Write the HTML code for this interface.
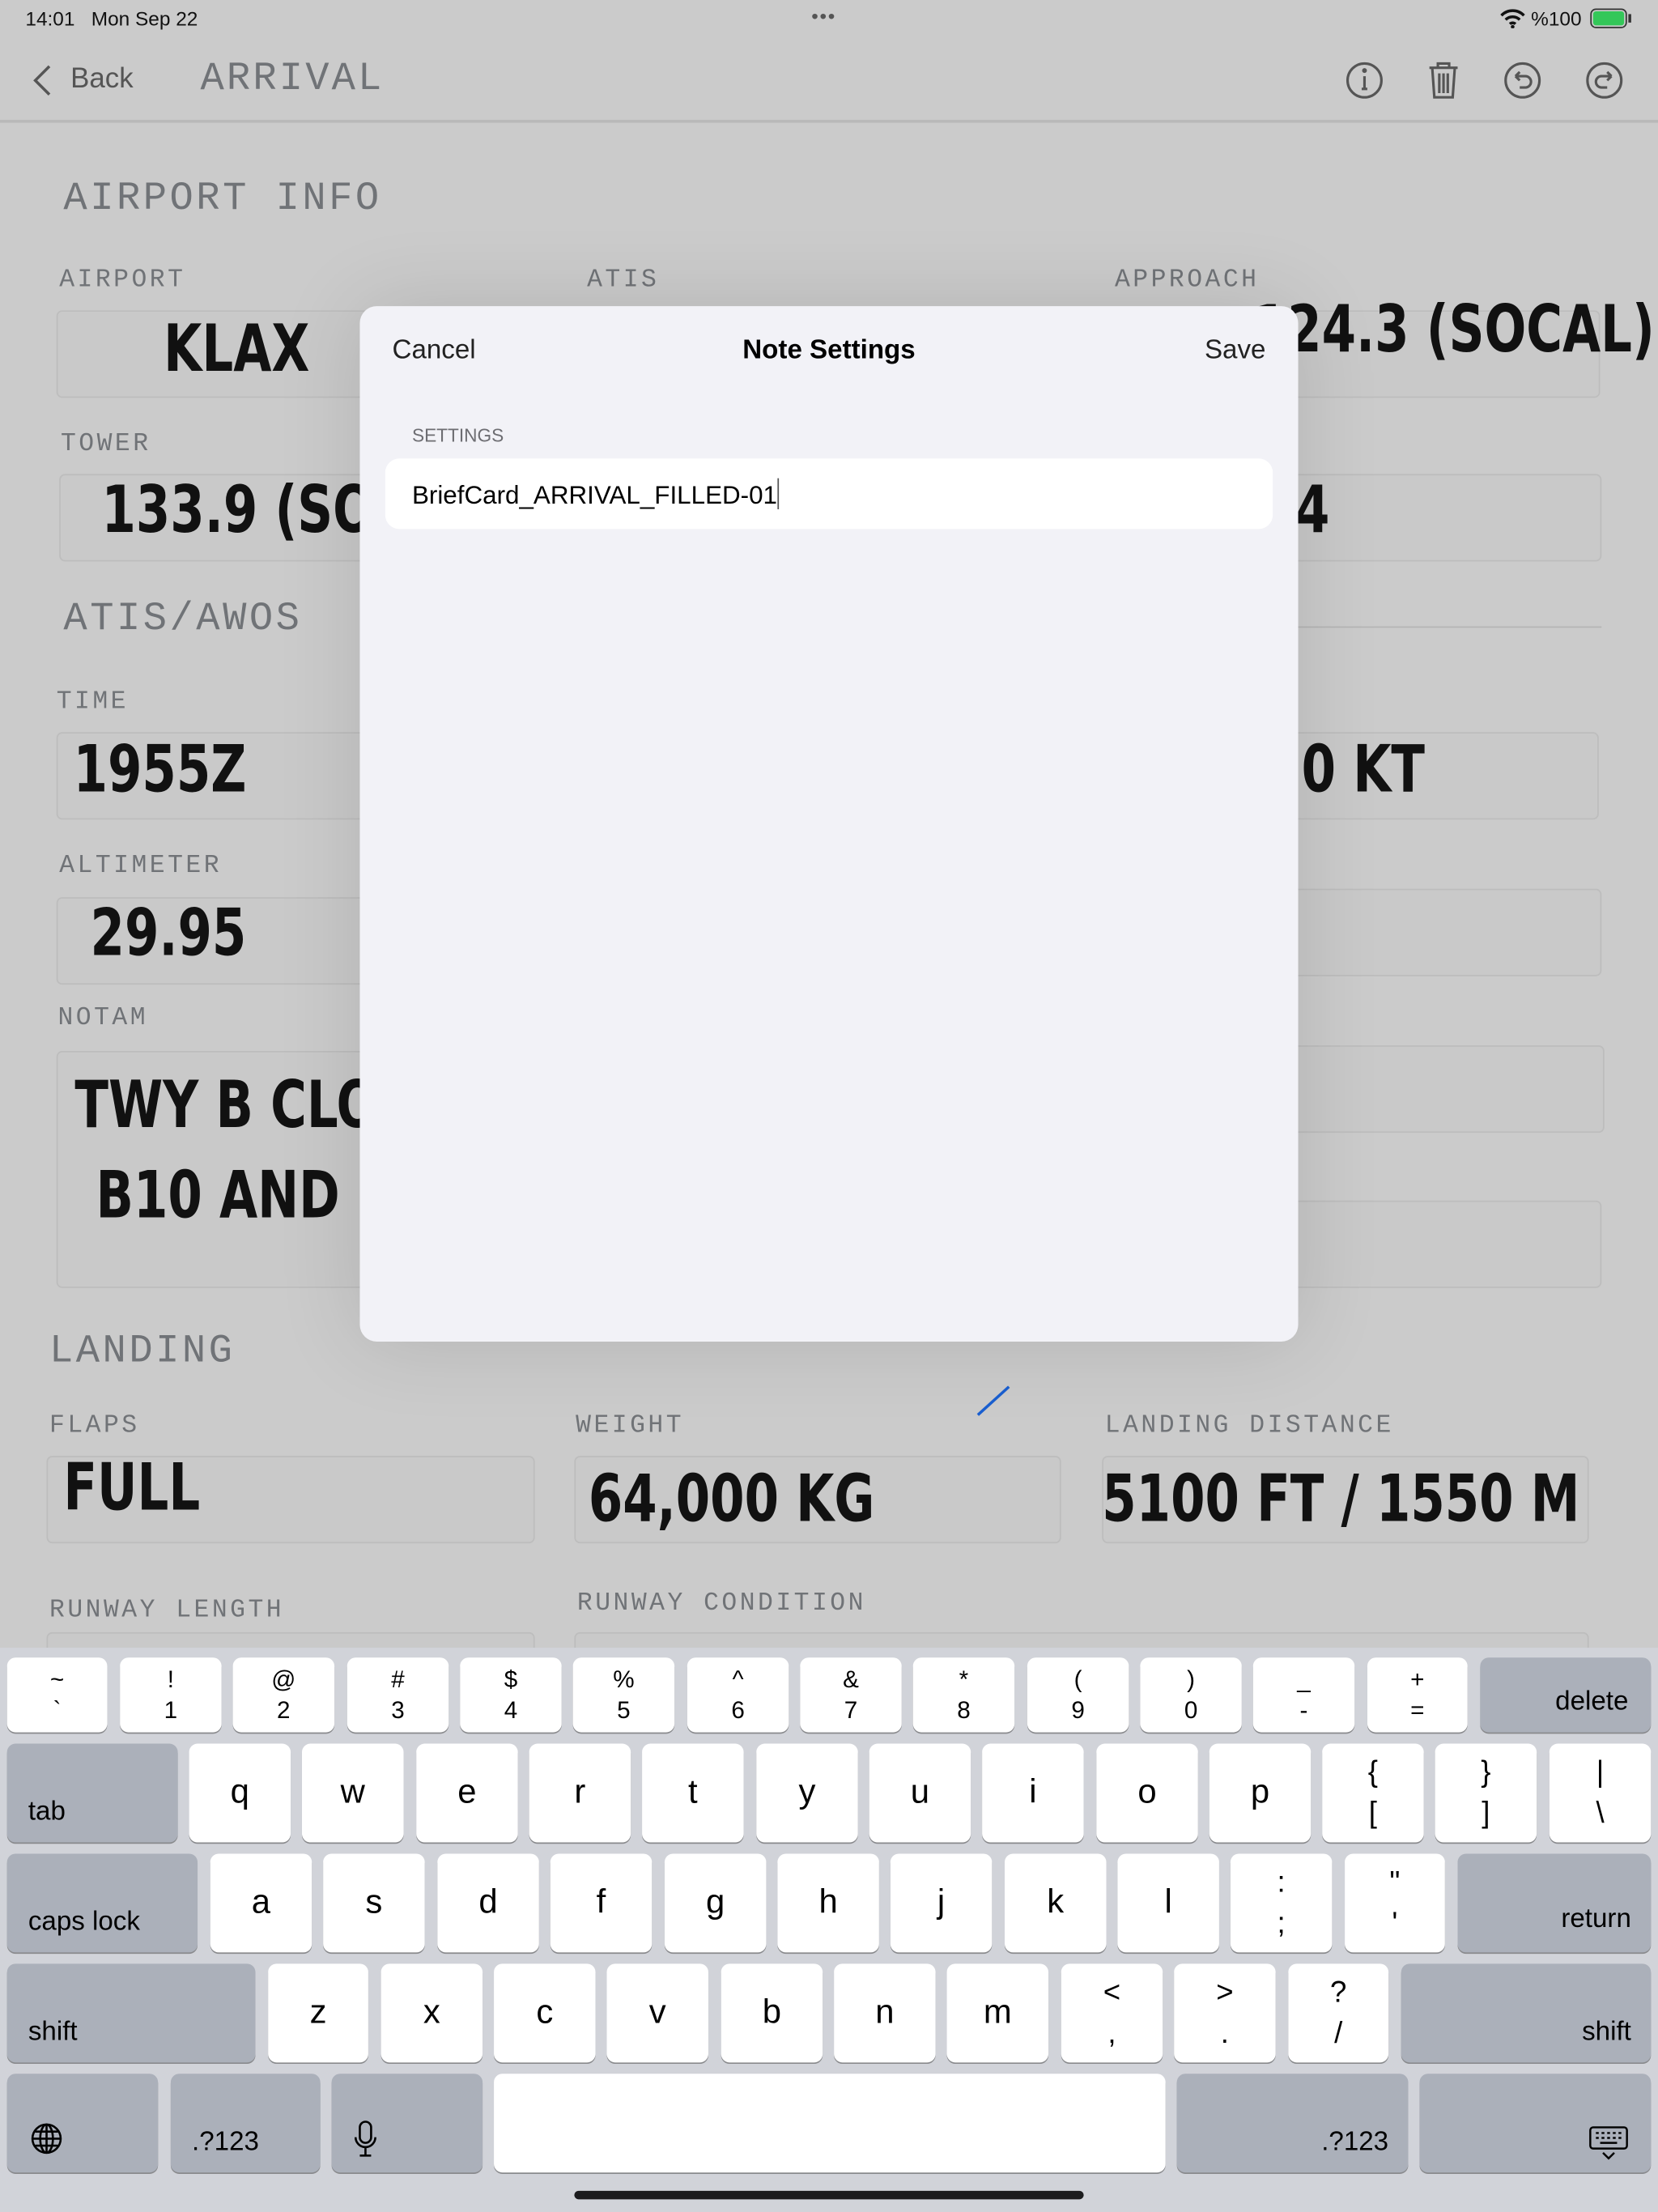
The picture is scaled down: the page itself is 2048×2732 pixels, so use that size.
<!DOCTYPE html>
<html><head><meta charset="utf-8"><style>
*{margin:0;padding:0;box-sizing:border-box}
html,body{width:2048px;height:2732px;overflow:hidden;background:#cacaca}
#s{position:absolute;left:0;top:0;width:1175px;height:1568px;transform:scale(1.74298,1.74235);transform-origin:0 0;background:#cbcbcb;font-family:"Liberation Sans",sans-serif}
.a{position:absolute;white-space:nowrap}
.m{font-family:"Liberation Mono","DejaVu Sans Mono",monospace;color:#707377;letter-spacing:2px}
.lb{font-size:18px}
.hd{font-size:28px;letter-spacing:2px}
.bx{position:absolute;border:1.5px solid #bdbdbd;border-radius:4px;background:#c9c9c9}
.hw{position:absolute;font-family:"DejaVu Sans","Liberation Sans",sans-serif;font-weight:bold;color:#111;white-space:nowrap;transform:scaleX(.76);transform-origin:0 50%}
.k{position:absolute;background:#fff;border-radius:6px;box-shadow:0 1px 0 #898a8d;font-size:24px;color:#000;display:flex;align-items:center;justify-content:center;text-align:center;line-height:1}
.k2{flex-direction:column;font-size:17px;line-height:1.25}
.sp{background:#abb0ba;font-size:19px}
</style></head><body><div id="s">
<div class="a" style="left:18px;top:5px;font-size:14px;color:#111">14:01&nbsp;&nbsp;&nbsp;Mon Sep 22</div>
<div class="a" style="left:575px;top:3px;font-size:14px;color:#555;letter-spacing:1px">•••</div>
<svg class="a" style="left:1063px;top:6px" width="18" height="14" viewBox="0 0 18 14"><path d="M1 5a11 11 0 0 1 16 0M4 8a7 7 0 0 1 10 0M7 11a3 3 0 0 1 4 0" stroke="#111" stroke-width="2" fill="none"/><circle cx="9" cy="13" r="1.3" fill="#111"/></svg>
<div class="a" style="left:1085px;top:5px;font-size:14px;color:#111">%100</div>
<div class="a" style="left:1127px;top:6px;width:26px;height:14px;border:1.5px solid #333;border-radius:4px;padding:1px"><div style="width:100%;height:100%;background:#34c759;border-radius:2px"></div></div>
<div class="a" style="left:1154px;top:10px;width:2px;height:6px;background:#333"></div>
<svg class="a" style="left:22px;top:45px" width="16" height="24" viewBox="0 0 16 24"><path d="M13 2L3 12l10 10" stroke="#555" stroke-width="2" fill="none"/></svg>
<div class="a" style="left:50px;top:45px;font-size:20px;color:#555">Back</div>
<div class="a m" style="left:142px;top:41px;font-size:28px;letter-spacing:1.8px">ARRIVAL</div>
<svg class="a" style="left:950px;top:40px" width="205" height="34" viewBox="0 0 205 34">
<g stroke="#555" stroke-width="1.8" fill="none">
<circle cx="17" cy="17" r="12"/><path d="M17 14v9M15 23h4"/><circle cx="17" cy="10" r=".8" fill="#555"/>
<path d="M63 8h20M69 8V5h8v3M65 8l1.5 21h13L81 8M70 12v14M73 12v14M76 12v14"/>
<circle cx="129" cy="17" r="12"/><path d="M124 14h7a4 4 0 0 1 0 8h-4M124 14l3-3M124 14l3 3"/>
<circle cx="187" cy="17" r="12"/><path d="M192 14h-7a4 4 0 0 0 0 8h4M192 14l-3-3M192 14l-3 3"/>
</g></svg>
<div class="a" style="left:0;top:85px;width:1175px;height:2px;background:#b8b8b8"></div>
<div class="a m hd" style="left:45px;top:126px">AIRPORT INFO</div>
<div class="a m lb" style="left:42px;top:189px">AIRPORT</div>
<div class="a m lb" style="left:416px;top:189px">ATIS</div>
<div class="a m lb" style="left:790px;top:189px">APPROACH</div>
<div class="bx" style="left:40px;top:220px;width:340px;height:62px"></div>
<div class="bx" style="left:790px;top:220px;width:344px;height:62px"></div>
<div class="hw" style="left:116px;top:220px;font-size:46px">KLAX</div>
<div class="hw" style="left:888px;top:206px;font-size:46px">124.3 (SOCAL)</div>
<div class="a m lb" style="left:43px;top:305px">TOWER</div>
<div class="bx" style="left:42px;top:336px;width:340px;height:62px"></div>
<div class="bx" style="left:910px;top:336px;width:225px;height:62px"></div>
<div class="hw" style="left:72px;top:334px;font-size:46px">133.9 (SOCAL)</div>
<div class="hw" style="left:918px;top:334px;font-size:46px">4</div>
<div class="a m hd" style="left:45px;top:424px">ATIS/AWOS</div>
<div class="a" style="left:915px;top:444px;width:220px;height:1px;background:#b5b5b5"></div>
<div class="a m lb" style="left:40px;top:488px">TIME</div>
<div class="bx" style="left:40px;top:519px;width:340px;height:62px"></div>
<div class="bx" style="left:905px;top:519px;width:228px;height:62px"></div>
<div class="hw" style="left:52px;top:518px;font-size:46px">1955Z</div>
<div class="hw" style="left:898px;top:518px;font-size:46px">10 KT</div>
<div class="a m lb" style="left:42px;top:604px">ALTIMETER</div>
<div class="bx" style="left:40px;top:636px;width:340px;height:62px"></div>
<div class="bx" style="left:905px;top:630px;width:230px;height:62px"></div>
<div class="hw" style="left:64px;top:634px;font-size:46px">29.95</div>
<div class="a m lb" style="left:41px;top:712px">NOTAM</div>
<div class="bx" style="left:40px;top:745px;width:340px;height:168px"></div>
<div class="bx" style="left:905px;top:741px;width:232px;height:62px"></div>
<div class="bx" style="left:905px;top:851px;width:230px;height:62px"></div>
<div class="hw" style="left:53px;top:756px;font-size:46px">TWY B CLOSED</div>
<div class="hw" style="left:68px;top:820px;font-size:46px">B10 AND</div>
<div class="a m hd" style="left:35px;top:943px">LANDING</div>
<div class="a m lb" style="left:35px;top:1001px">FLAPS</div>
<div class="a m lb" style="left:408px;top:1001px">WEIGHT</div>
<div class="a m lb" style="left:783px;top:1001px">LANDING DISTANCE</div>
<div class="bx" style="left:33px;top:1032px;width:346px;height:62px"></div>
<div class="bx" style="left:407px;top:1032px;width:345px;height:62px"></div>
<div class="bx" style="left:781px;top:1032px;width:345px;height:62px"></div>
<div class="hw" style="left:45px;top:1027px;font-size:46px">FULL</div>
<div class="hw" style="left:417px;top:1035px;font-size:46px">64,000 KG</div>
<div class="hw" style="left:781px;top:1035px;font-size:46px">5100 FT / 1550 M</div>
<svg class="a" style="left:690px;top:980px" width="30" height="26"><path d="M3 23L25 3" stroke="#1a5fd0" stroke-width="2"/></svg>
<div class="a m lb" style="left:35px;top:1132px">RUNWAY LENGTH</div>
<div class="a m lb" style="left:409px;top:1127px">RUNWAY CONDITION</div>
<div class="bx" style="left:33px;top:1157px;width:346px;height:40px"></div>
<div class="bx" style="left:407px;top:1157px;width:719px;height:40px"></div>
<div class="a" style="left:255px;top:217px;width:665px;height:734px;background:#f2f2f7;border-radius:12px;box-shadow:0 0 60px rgba(0,0,0,.12)">
<div class="a" style="left:23px;top:21px;font-size:19px;color:#222">Cancel</div>
<div class="a" style="left:0;width:665px;text-align:center;top:21px;font-size:19px;font-weight:bold;color:#000">Note Settings</div>
<div class="a" style="right:23px;top:21px;font-size:19px;color:#222">Save</div>
<div class="a" style="left:37px;top:84px;font-size:13px;color:#6d6d72">SETTINGS</div>
<div class="a" style="left:18px;top:108px;width:629px;height:50px;background:#fff;border-radius:10px"></div>
<div class="a" style="left:37px;top:122px;font-size:18px;color:#000">BriefCard_ARRIVAL_FILLED-01<span style="display:inline-block;width:1.5px;height:22px;background:#555;vertical-align:-4px"></span></div>
</div>
<div class="a" style="left:0;top:1168px;width:1175px;height:400px;background:#d1d3d9"></div>
<div class="a" style="left:407px;top:1553px;width:361px;height:6px;border-radius:3px;background:#1c1c1e"></div>
<div class="k k2" style="left:5px;top:1175px;width:71px;height:53px">~<br>`</div>
<div class="k k2" style="left:85px;top:1175px;width:72px;height:53px">!<br>1</div>
<div class="k k2" style="left:165px;top:1175px;width:72px;height:53px">@<br>2</div>
<div class="k k2" style="left:246px;top:1175px;width:72px;height:53px">#<br>3</div>
<div class="k k2" style="left:326px;top:1175px;width:72px;height:53px">$<br>4</div>
<div class="k k2" style="left:406px;top:1175px;width:72px;height:53px">%<br>5</div>
<div class="k k2" style="left:487px;top:1175px;width:72px;height:53px">^<br>6</div>
<div class="k k2" style="left:567px;top:1175px;width:72px;height:53px">&amp;<br>7</div>
<div class="k k2" style="left:647px;top:1175px;width:72px;height:53px">*<br>8</div>
<div class="k k2" style="left:728px;top:1175px;width:72px;height:53px">(<br>9</div>
<div class="k k2" style="left:808px;top:1175px;width:72px;height:53px">)<br>0</div>
<div class="k k2" style="left:888px;top:1175px;width:72px;height:53px">_<br>-</div>
<div class="k k2" style="left:969px;top:1175px;width:71px;height:53px">+<br>=</div>
<div class="k sp" style="left:1049px;top:1175px;width:121px;height:53px;justify-content:flex-end;padding:10px 16px 0 0">delete</div>
<div class="k sp" style="left:5px;top:1236px;width:121px;height:70px;justify-content:flex-start;align-items:flex-end;padding:0 0 12px 15px">tab</div>
<div class="k" style="left:134px;top:1236px;width:72px;height:70px">q</div>
<div class="k" style="left:214px;top:1236px;width:72px;height:70px">w</div>
<div class="k" style="left:295px;top:1236px;width:72px;height:70px">e</div>
<div class="k" style="left:375px;top:1236px;width:72px;height:70px">r</div>
<div class="k" style="left:455px;top:1236px;width:72px;height:70px">t</div>
<div class="k" style="left:536px;top:1236px;width:72px;height:70px">y</div>
<div class="k" style="left:616px;top:1236px;width:72px;height:70px">u</div>
<div class="k" style="left:696px;top:1236px;width:72px;height:70px">i</div>
<div class="k" style="left:777px;top:1236px;width:72px;height:70px">o</div>
<div class="k" style="left:857px;top:1236px;width:72px;height:70px">p</div>
<div class="k k2" style="left:937px;top:1236px;width:72px;height:70px;font-size:21px;line-height:1.4">{<br>[</div>
<div class="k k2" style="left:1017px;top:1236px;width:72px;height:70px;font-size:21px;line-height:1.4">}<br>]</div>
<div class="k k2" style="left:1098px;top:1236px;width:72px;height:70px;font-size:21px;line-height:1.4">|<br>\</div>
<div class="k sp" style="left:5px;top:1314px;width:135px;height:70px;justify-content:flex-start;align-items:flex-end;padding:0 0 12px 15px">caps lock</div>
<div class="k" style="left:149px;top:1314px;width:72px;height:70px">a</div>
<div class="k" style="left:229px;top:1314px;width:72px;height:70px">s</div>
<div class="k" style="left:310px;top:1314px;width:72px;height:70px">d</div>
<div class="k" style="left:390px;top:1314px;width:72px;height:70px">f</div>
<div class="k" style="left:471px;top:1314px;width:72px;height:70px">g</div>
<div class="k" style="left:551px;top:1314px;width:72px;height:70px">h</div>
<div class="k" style="left:631px;top:1314px;width:72px;height:70px">j</div>
<div class="k" style="left:712px;top:1314px;width:72px;height:70px">k</div>
<div class="k" style="left:792px;top:1314px;width:72px;height:70px">l</div>
<div class="k k2" style="left:872px;top:1314px;width:72px;height:70px;font-size:21px;line-height:1.4">:<br>;</div>
<div class="k k2" style="left:953px;top:1314px;width:71px;height:70px;font-size:21px;line-height:1.4">"<br>'</div>
<div class="k sp" style="left:1033px;top:1314px;width:137px;height:70px;justify-content:flex-end;align-items:flex-end;padding:0 14px 14px 0">return</div>
<div class="k sp" style="left:5px;top:1392px;width:176px;height:70px;justify-content:flex-start;align-items:flex-end;padding:0 0 12px 15px">shift</div>
<div class="k" style="left:190px;top:1392px;width:71px;height:70px">z</div>
<div class="k" style="left:270px;top:1392px;width:72px;height:70px">x</div>
<div class="k" style="left:350px;top:1392px;width:72px;height:70px">c</div>
<div class="k" style="left:430px;top:1392px;width:72px;height:70px">v</div>
<div class="k" style="left:511px;top:1392px;width:72px;height:70px">b</div>
<div class="k" style="left:591px;top:1392px;width:72px;height:70px">n</div>
<div class="k" style="left:671px;top:1392px;width:72px;height:70px">m</div>
<div class="k k2" style="left:752px;top:1392px;width:72px;height:70px;font-size:21px;line-height:1.4">&lt;<br>,</div>
<div class="k k2" style="left:832px;top:1392px;width:72px;height:70px;font-size:21px;line-height:1.4">&gt;<br>.</div>
<div class="k k2" style="left:913px;top:1392px;width:71px;height:70px;font-size:21px;line-height:1.4">?<br>/</div>
<div class="k sp" style="left:993px;top:1392px;width:177px;height:70px;justify-content:flex-end;align-items:flex-end;padding:0 14px 12px 0">shift</div>
<div class="k sp" style="left:5px;top:1470px;width:107px;height:70px;justify-content:flex-start;align-items:flex-end;padding:0 0 12px 16px"><svg width="24" height="24" viewBox="0 0 24 24" fill="none" stroke="#000" stroke-width="1.5"><circle cx="12" cy="12" r="10"/><ellipse cx="12" cy="12" rx="4.5" ry="10"/><path d="M2 12h20M4 7h16M4 17h16M12 2v20"/></svg></div>
<div class="k sp" style="left:121px;top:1470px;width:106px;height:70px;justify-content:flex-start;align-items:flex-end;padding:0 0 12px 15px">.?123</div>
<div class="k sp" style="left:235px;top:1470px;width:107px;height:70px;justify-content:flex-start;align-items:flex-end;padding:0 0 10px 14px"><svg width="20" height="28" viewBox="0 0 20 28" fill="none" stroke="#000" stroke-width="1.5"><rect x="6" y="2" width="8" height="15" rx="4"/><path d="M3 13a7 7 0 0 0 14 0M10 20v6M6 26h8"/></svg></div>
<div class="k" style="left:350px;top:1470px;width:476px;height:70px"></div>
<div class="k sp" style="left:834px;top:1470px;width:164px;height:70px;justify-content:flex-end;align-items:flex-end;padding:0 14px 12px 0">.?123</div>
<div class="k sp" style="left:1006px;top:1470px;width:164px;height:70px;justify-content:flex-end;align-items:flex-end;padding:0 16px 8px 0"><svg width="28" height="26" viewBox="0 0 28 26" fill="none" stroke="#000" stroke-width="1.4"><rect x="1" y="2" width="26" height="15" rx="2"/><path d="M5 6h2M9 6h2M13 6h2M17 6h2M21 6h2M5 9.5h2M9 9.5h2M13 9.5h2M17 9.5h2M21 9.5h2M8 13h12M10 20l4 4 4-4"/></svg></div>
</div></body></html>
